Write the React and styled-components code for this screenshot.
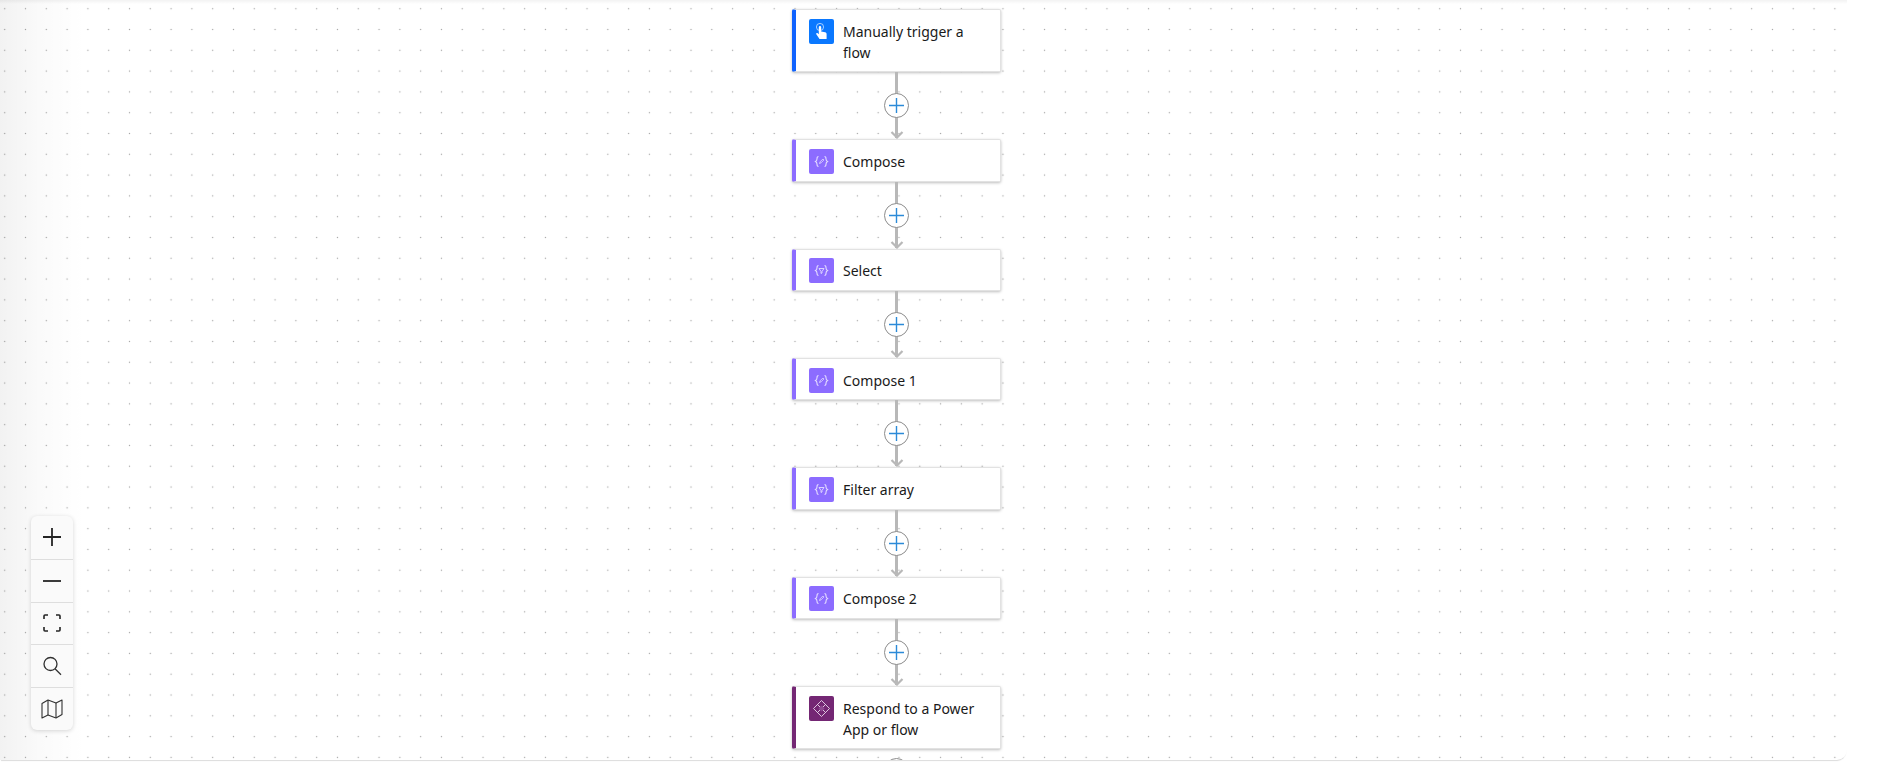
import React from "react";
import styled, { createGlobalStyle } from "styled-components";

const GlobalStyle = createGlobalStyle`
  html, body {
    margin: 0;
    padding: 0;
    background: #ffffff;
    overflow: hidden;
  }
`;

const Page = styled.div`
  width: 1904px;
  height: 763px;
  background: #ffffff;
`;

const Canvas = styled.div`
  position: relative;
  box-sizing: border-box;
  width: 1847px;
  height: 760px;
  padding: 9.3px 0 0 792px;
  overflow: hidden;
  border-bottom-right-radius: 10px;
  box-shadow: 0 2px 1px -1px rgba(0, 0, 0, 0.14);
  font-family: "Noto Sans", "Open Sans", sans-serif;
  background-color: #ffffff;
  background-image:
    linear-gradient(to bottom, rgba(0, 0, 0, 0.05), rgba(0, 0, 0, 0) 4px),
    linear-gradient(to right, rgba(0, 0, 0, 0.05), rgba(0, 0, 0, 0.02) 40px, rgba(0, 0, 0, 0) 85px),
    radial-gradient(circle at center, #a6a6a6 0.55px, rgba(166, 166, 166, 0) 1.05px);
  background-size: 100% 100%, 100% 100%, 20.8px 20.8px;
  background-position: 0 0, 0 0, -5.7px -1.7px;
`;

const Flow = styled.div`
  display: flex;
  flex-direction: column;
  width: 209px;
`;

const Card = styled.div`
  box-sizing: border-box;
  display: flex;
  align-items: flex-start;
  gap: 9px;
  height: ${(p) => (p.$tall ? "63px" : "42.4px")};
  padding: 8.5px 8px 0 13px;
  background: #ffffff;
  border: 1px solid #e2e2e2;
  border-left: 4px solid ${(p) => p.$accent};
  border-radius: 2px;
  box-shadow: 0 1px 3px rgba(0, 0, 0, 0.26);
`;

const IconTile = styled.div`
  flex: none;
  display: flex;
  align-items: center;
  justify-content: center;
  width: 25px;
  height: 25px;
  border-radius: 2px;
  background: ${(p) => p.$bg};
`;

const Label = styled.div`
  font-size: 14px;
  line-height: 21px;
  color: #1a1a1a;
  margin-top: ${(p) => (p.$tall ? "2.5px" : "2px")};
`;

const Connector = styled.div`
  position: relative;
  display: flex;
  align-items: center;
  justify-content: center;
  height: ${(p) => (p.$last ? "42px" : "67px")};

  &::before {
    content: "";
    display: ${(p) => (p.$last ? "none" : "block")};
    position: absolute;
    top: 0;
    bottom: 1px;
    left: 50%;
    width: 3px;
    margin-left: -1.5px;
    background: #b8b8b8;
  }
`;

const Arrow = styled.svg`
  position: absolute;
  bottom: 0;
  left: 50%;
  margin-left: -7px;
`;

const AddButton = styled.div`
  position: relative;
  box-sizing: border-box;
  display: flex;
  align-items: center;
  justify-content: center;
  width: 25px;
  height: 25px;
  border-radius: 50%;
  background: #ffffff;
  border: 1px solid #8c8c8c;
`;

const ZoomPanel = styled.div`
  position: absolute;
  left: 31px;
  top: 516px;
  width: 42px;
  display: flex;
  flex-direction: column;
  background: #fafafa;
  border-radius: 6px;
  box-shadow: 0 1px 4px rgba(0, 0, 0, 0.16);
`;

const ZoomButton = styled.div`
  display: flex;
  align-items: center;
  justify-content: center;
  height: 42.8px;
  box-sizing: border-box;
  border-top: ${(p) => (p.$first ? "none" : "1px solid #dedede")};
`;

const Compose = () => (
  <svg width="17" height="17" viewBox="0 0 17 17" fill="none" stroke="#e4dcff" strokeWidth="1.100">
    <path d="M5.5 3.5c-1.5 0-1.5 1-1.5 2.2s0 2-1.5 2.8c1.5.8 1.5 1.600 1.500 2.800s0 2.200 1.500 2.200" />
    <path d="M11.500 3.500c1.500 0 1.500 1 1.500 2.200s0 2 1.500 2.800c-1.500.8-1.500 1.600-1.500 2.800s0 2.200-1.500 2.200" />
    <path d="M6.500 10.500l.6-1.700 2.800-2.800 1 1-2.800 2.800z" strokeWidth="0.8" />
  </svg>
);

const Funnel = () => (
  <svg width="17" height="17" viewBox="0 0 17 17" fill="none" stroke="#e4dcff" strokeWidth="1.100">
    <path d="M5.5 3.500c-1.500 0-1.500 1-1.500 2.200s0 2-1.500 2.800c1.500.8 1.500 1.600 1.500 2.800s0 2.200 1.500 2.200" />
    <path d="M11.500 3.500c1.500 0 1.500 1 1.500 2.200s0 2 1.500 2.800c-1.500.8-1.500 1.600-1.500 2.800s0 2.200-1.500 2.200" />
    <path d="M6 6.500h5l-2 3v1.500l-1 .5v-2z" strokeWidth="0.9" />
  </svg>
);

const Touch = () => (
  <svg width="19" height="19" viewBox="0 0 19 19" fill="none">
    <circle cx="8" cy="5" r="3.600" stroke="#ffffff" strokeOpacity="0.7" strokeWidth="0.9" />
    <path
      d="M6.800 5.200a1.200 1.200 0 0 1 2.400 0v4.300l3.900.8c1 .2 1.500.9 1.500 1.800V17H7.500L4.300 12.300c-.5-.8.6-1.800 1.400-1l1.100 1z"
      fill="#ffffff"
    />
  </svg>
);

const PowerApps = () => (
  <svg width="19" height="19" viewBox="0 0 19 19" fill="none" stroke="#e8d5ea" strokeWidth="0.9">
    <path d="M9.500 1.500l8 8-8 8-8-8z" />
    <path d="M5.500 5.500l8 8M13.500 5.500l-8 8" />
    <path d="M9.500 6.500l3 3-3 3-3-3z" fill="#8f4a92" stroke="none" />
  </svg>
);

const steps = [
  { label: "Manually trigger a flow", accent: "#0f62fe", tile: "#0a78ff", icon: <Touch />, tall: true },
  { label: "Compose", accent: "#8c6cff", tile: "#8c6cff", icon: <Compose /> },
  { label: "Select", accent: "#8c6cff", tile: "#8c6cff", icon: <Funnel /> },
  { label: "Compose 1", accent: "#8c6cff", tile: "#8c6cff", icon: <Compose /> },
  { label: "Filter array", accent: "#8c6cff", tile: "#8c6cff", icon: <Funnel /> },
  { label: "Compose 2", accent: "#8c6cff", tile: "#8c6cff", icon: <Compose /> },
  { label: "Respond to a Power App or flow", accent: "#742774", tile: "#742774", icon: <PowerApps />, tall: true },
];

const Link = ({ last }) => (
  <Connector $last={last}>
    {!last && (
      <Arrow width="14" height="9" viewBox="0 0 14 9" fill="none" stroke="#b8b8b8" strokeWidth="2.200">
        <path d="M1.500 2l5.500 5.500L12.500 2" />
      </Arrow>
    )}
    <AddButton>
      <svg width="17" height="17" viewBox="0 0 17 17" stroke="#2b8ad8" strokeWidth="1.400">
        <path d="M8.500 1v15M1 8.500h15" />
      </svg>
    </AddButton>
  </Connector>
);

const App = () => (
  <Page>
    <GlobalStyle />
    <Canvas>
      <Flow>
        {steps.map((step, index) => (
          <React.Fragment key={step.label}>
            <Card $accent={step.accent} $tall={step.tall}>
              <IconTile $bg={step.tile}>{step.icon}</IconTile>
              <Label $tall={step.tall}>{step.label}</Label>
            </Card>
            <Link last={index === steps.length - 1} />
          </React.Fragment>
        ))}
      </Flow>
      <ZoomPanel>
        <ZoomButton $first>
          <svg width="20" height="20" viewBox="0 0 20 20" stroke="#242424" strokeWidth="1.800">
            <path d="M10 1v18M1 10h18" />
          </svg>
        </ZoomButton>
        <ZoomButton>
          <svg width="20" height="20" viewBox="0 0 20 20" stroke="#242424" strokeWidth="1.800">
            <path d="M1 10h18" />
          </svg>
        </ZoomButton>
        <ZoomButton>
          <svg width="20" height="20" viewBox="0 0 20 20" fill="none" stroke="#242424" strokeWidth="1.600">
            <path d="M2 6V3a1 1 0 0 1 1-1h3M14 2h3a1 1 0 0 1 1 1v3M18 14v3a1 1 0 0 1-1 1h-3M6 18H3a1 1 0 0 1-1-1v-3" />
          </svg>
        </ZoomButton>
        <ZoomButton>
          <svg width="20" height="20" viewBox="0 0 20 20" fill="none" stroke="#303030" strokeWidth="1.300">
            <circle cx="8.500" cy="8" r="6.500" />
            <path d="M13 12.800l6 6" />
          </svg>
        </ZoomButton>
        <ZoomButton>
          <svg width="24" height="24" viewBox="0 0 24 24" fill="none" stroke="#303030" strokeWidth="1.100" strokeLinejoin="round">
            <path d="M2 6.500L8 3l8 3 6-3v14.500L16 21l-8-3-6 3z" />
            <path d="M8 3v15M16 6v15" />
          </svg>
        </ZoomButton>
      </ZoomPanel>
    </Canvas>
  </Page>
);

export default App;
